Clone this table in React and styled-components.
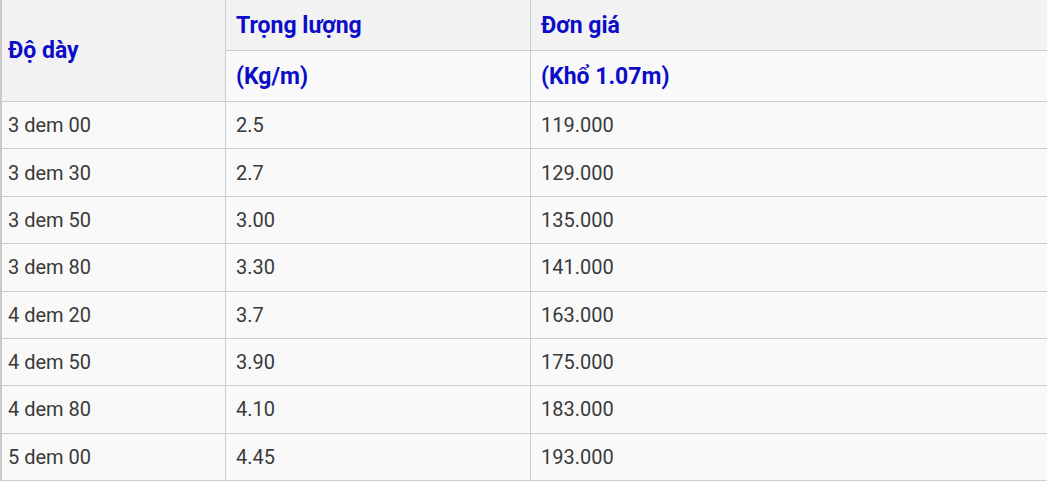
import styled, { createGlobalStyle } from 'styled-components'

const GlobalStyle = createGlobalStyle`
  html, body {
    margin: 0;
    padding: 0;
    background: #ffffff;
    overflow: hidden;
  }
  body {
    font-family: Roboto, "Liberation Sans", Arial, sans-serif;
  }
`

const Table = styled.table`
  width: 1060px;
  border-collapse: separate;
  border-spacing: 0;
  table-layout: fixed;
  border-left: 2px solid #c9c9c9;
`

const HeadCell = styled.th`
  box-sizing: border-box;
  height: ${p => p.$h}px;
  padding: 0 0 0 ${p => p.$pad || 10}px;
  text-align: left;
  vertical-align: middle;
  background: ${p => p.$light ? '#f9f9f9' : '#f2f2f2'};
  color: #0c0cc8;
  font-size: 23px;
  font-weight: 700;
  border-right: 1px solid #cccccc;
  border-bottom: 1px solid #cccccc;
`

const Cell = styled.td`
  box-sizing: border-box;
  height: 47.375px;
  padding: 0 0 0 ${p => p.$pad || 10}px;
  vertical-align: middle;
  background: #f9f9f9;
  color: #3a3a3a;
  font-size: 20px;
  border-right: 1px solid #cccccc;
  border-bottom: 1px solid #cccccc;
`

const rows = [
  ['3 dem 00', '2.5', '119.000'],
  ['3 dem 30', '2.7', '129.000'],
  ['3 dem 50', '3.00', '135.000'],
  ['3 dem 80', '3.30', '141.000'],
  ['4 dem 20', '3.7', '163.000'],
  ['4 dem 50', '3.90', '175.000'],
  ['4 dem 80', '4.10', '183.000'],
  ['5 dem 00', '4.45', '193.000']
]

export default function App() {
  return (
    <>
      <GlobalStyle />
      <Table>
        <colgroup>
          <col style={{ width: 224 }} />
          <col style={{ width: 305 }} />
          <col />
        </colgroup>
        <thead>
          <tr>
            <HeadCell rowSpan={2} $h={102} $pad={6}>Độ dày</HeadCell>
            <HeadCell $h={51}>Trọng lượng</HeadCell>
            <HeadCell $h={51}>Đơn giá</HeadCell>
          </tr>
          <tr>
            <HeadCell $h={51} $light>(Kg/m)</HeadCell>
            <HeadCell $h={51} $light>(Khổ 1.07m)</HeadCell>
          </tr>
        </thead>
        <tbody>
          {rows.map(r => (
            <tr key={r[0]}>
              <Cell $pad={6}>{r[0]}</Cell>
              <Cell>{r[1]}</Cell>
              <Cell>{r[2]}</Cell>
            </tr>
          ))}
        </tbody>
      </Table>
    </>
  )
}
